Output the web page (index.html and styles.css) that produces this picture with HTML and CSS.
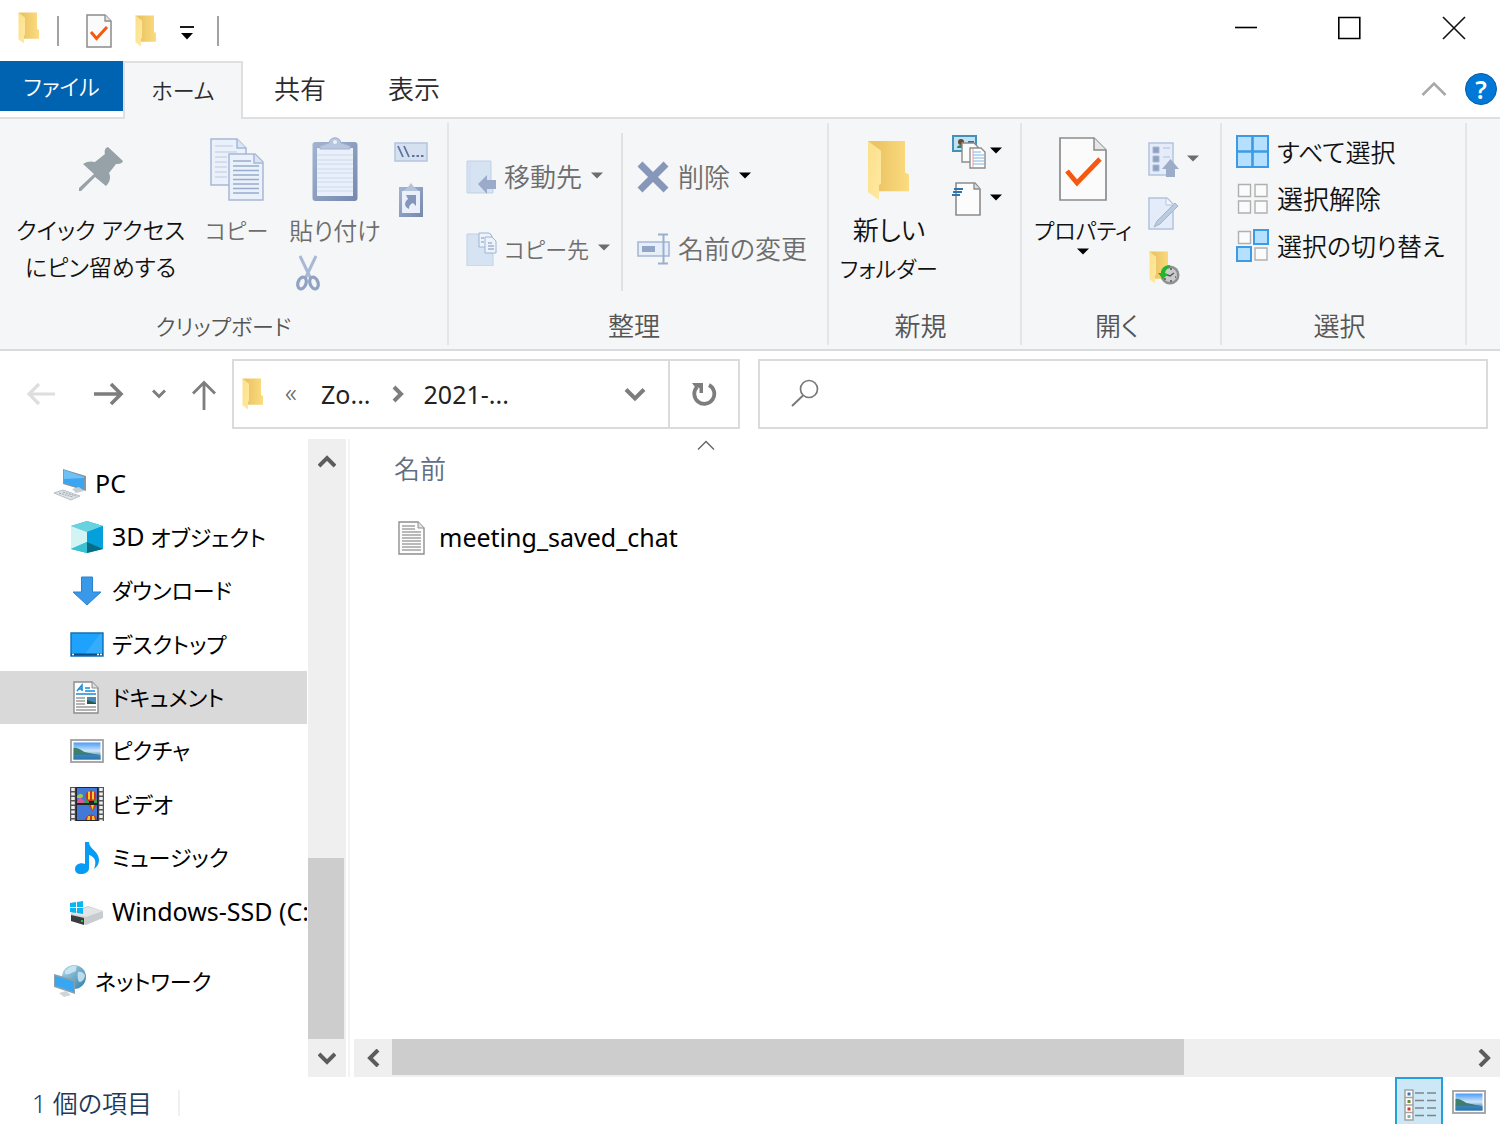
FILE: index.html
```html
<!DOCTYPE html>
<html lang="ja">
<head>
<meta charset="utf-8">
<meta name="viewport" content="width=device-width, initial-scale=1">
<title>エクスプローラー</title>
<link rel="stylesheet" href="styles.css">
</head>
<body>
<svg class="defs" aria-hidden="true">
  <defs>
    <linearGradient id="gBack" x1="0" y1="0" x2="1" y2="0"><stop offset="0.2" stop-color="#ebc464"/><stop offset="1" stop-color="#fbdc80"/></linearGradient>
    <linearGradient id="gFlap" x1="0" y1="0" x2="1" y2="1"><stop offset="0" stop-color="#fbe08a"/><stop offset="1" stop-color="#ffe9a2"/></linearGradient>
    <linearGradient id="gSky" x1="0" y1="0" x2="0" y2="1"><stop offset="0" stop-color="#4c9bf5"/><stop offset="0.5" stop-color="#cfe8fb"/><stop offset="0.65" stop-color="#8fb9cf"/><stop offset="1" stop-color="#1f6aa8"/></linearGradient>
    <linearGradient id="gBoard" x1="0" y1="0" x2="1" y2="1"><stop offset="0" stop-color="#a3b4d2"/><stop offset="1" stop-color="#7688ad"/></linearGradient>
    <linearGradient id="gGlobe" x1="0" y1="0" x2="1" y2="1"><stop offset="0" stop-color="#b5dcec"/><stop offset="1" stop-color="#2c7da8"/></linearGradient>
    <symbol id="folder" viewBox="0 0 44 62" preserveAspectRatio="none">
      <path d="M1 1h37v32l4 2v17H12z" fill="url(#gBack)"/>
      <path d="M1 1l13 10v33l-2 2v15L1 53z" fill="url(#gFlap)"/>
    </symbol>
    <symbol id="check" viewBox="0 0 48 64" preserveAspectRatio="none">
      <path d="M1 1h34l12 12v50H1z" fill="#fbfbfc" stroke="#8c8c8c" stroke-width="1.7"/>
      <path d="M35 1v12h12" fill="#e6e6e6" stroke="#8c8c8c" stroke-width="1.5"/>
      <path d="M8 34l10 12L41 22" fill="none" stroke="#f4590f" stroke-width="4.8"/>
    </symbol>
    <symbol id="picture" viewBox="0 0 34 24">
      <rect x="1" y="1" width="32" height="22" fill="#fff" stroke="#a0a0a0" stroke-width="1.8"/>
      <rect x="3.5" y="3.5" width="27" height="17" fill="url(#gSky)"/>
      <path d="M3.500 9c4-1 7 2 11 4 5 1 9 2 14 3h-25z" fill="#3f8069"/>
      <path d="M3.500 16c8-2 18-1 27 0v4.500h-27z" fill="#2d78b4" opacity=".75"/>
    </symbol>
    <symbol id="caret" viewBox="0 0 12 7"><path d="M0 .5h12L6 6.500z"/></symbol>
  </defs>
</svg>

<div class="window">
  <header class="titlebar">
    <div class="quick">
      <svg class="ic-folder-s" aria-hidden="true"><use href="#folder"/></svg>
      <span class="quick-line"></span>
      <button class="plain quick-props" aria-label="プロパティ"><svg width="26" height="34" viewBox="0 0 26 34"><path d="M1 1h18l6 6v26H1z" fill="#fbfbfc" stroke="#8c8c8c" stroke-width="1.500"/><path d="M19 1v6h6" fill="#e6e6e6" stroke="#8c8c8c" stroke-width="1.300"/><path d="M5 18l5.500 6.500L21 13" fill="none" stroke="#f4590f" stroke-width="3"/></svg></button>
      <button class="plain quick-folder" aria-label="新しいフォルダー"><svg class="ic-folder-s"><use href="#folder"/></svg></button>
      <button class="plain quick-more" aria-label="カスタマイズ"><svg width="14" height="14" viewBox="0 0 14 14"><path d="M0 1h14" stroke="#000" stroke-width="1.800"/><path d="M1 7h12l-6 6.500z"/></svg></button>
      <span class="quick-line"></span>
    </div>
    <div class="controls">
      <button class="plain" aria-label="最小化"><svg width="24" height="24" viewBox="0 0 24 24"><path d="M1 11.500h22" stroke="#000" stroke-width="1.600"/></svg></button>
      <button class="plain" aria-label="最大化"><svg width="24" height="24" viewBox="0 0 24 24"><path d="M.8 1.500h21v21h-21z" fill="none" stroke="#000" stroke-width="1.600"/></svg></button>
      <button class="plain" aria-label="閉じる"><svg width="24" height="24" viewBox="0 0 24 24"><path d="M1 1l22 22M23 1L1 23" stroke="#111" stroke-width="1.600"/></svg></button>
    </div>
  </header>

  <nav class="tabs" aria-label="リボン">
    <button class="tab tab-file kana">ファイル</button>
    <button class="tab tab-active kana">ホーム</button>
    <button class="tab">共有</button>
    <button class="tab">表示</button>
    <div class="tabs-end">
      <button class="plain" aria-label="リボンの最小化"><svg width="26" height="16" viewBox="0 0 26 16"><path d="M1.500 14L13 2.500 24.500 14" fill="none" stroke="#a9a9a9" stroke-width="2.600"/></svg></button>
      <button class="help" aria-label="ヘルプ">?</button>
    </div>
  </nav>

  <section class="ribbon">
    <div class="group g-clip">
      <div class="group-body">
        <button class="big pin">
          <svg width="64" height="64" viewBox="0 0 64 64"><path d="M39 10l15 14c-1 3-5 3-7 3L40 36c2 4 1 9-3 13L26 40 12 54l-2 0 0-3 15-14-11-10c4-3 9-3 12-2l10-8c-1-3 0-6 3-7z" fill="#96a2a7"/></svg>
          <span>クイック アクセス<br>にピン留めする</span>
        </button>
        <button class="big kana copy" disabled>
          <svg width="56" height="64" viewBox="0 0 56 64"><g fill="#eaf1fb" stroke="#a6b8d6" stroke-width="1.500"><path d="M2 2h26l9 9v37H2z"/><path d="M28 2v9h9" fill="#dbe6f5"/><path d="M20 17h26l8 8v38H20z"/><path d="M45 17v9h9" fill="#dbe6f5"/></g><path d="M6 9h18M6 15h22M6 20h12M6 25h12M6 30h12M6 35h12M6 40h12" stroke="#bccae0" stroke-width="1.200"/><path d="M24 24h18M24 29h26M24 33.500h26M24 38h26M24 42.500h26M24 47h26M24 51.500h26M24 56h26" stroke="#9aaccb" stroke-width="1.400"/></svg>
          <span>コピー</span>
        </button>
        <div class="stack">
          <button class="big paste" disabled>
            <svg width="46" height="64" viewBox="0 0 46 64"><rect x=".5" y="5" width="45" height="59" rx="3" fill="url(#gBoard)"/><path d="M5 11h36v48H5z" fill="#e9f0fa"/><path d="M5 18h36M5 23h36M5 27h36M5 32h36M5 36h36M5 41h36M5 45h36M5 50h36M5 54h36" stroke="#cdd8ea"/><path d="M8 12V9l9-3c1-7 11-7 12 0l9 3v3z" fill="#b9c7de" stroke="#a2b2cf"/><circle cx="23" cy="5" r="2" fill="#e9f0fa"/></svg>
            <span>貼り付け</span>
          </button>
          <button class="plain cut" disabled aria-label="切り取り"><svg width="24" height="36" viewBox="0 0 24 36"><path d="M4 1l11 23M20 1L9 24" stroke="#a9b9d4" stroke-width="3"/><g fill="none" stroke="#91a3c4" stroke-width="3.200"><ellipse cx="6" cy="28" rx="4" ry="6" transform="rotate(20 6 28)"/><ellipse cx="18" cy="28" rx="4" ry="6" transform="rotate(-20 18 28)"/></g></svg></button>
        </div>
        <div class="small-col clip-small">
          <button class="plain" disabled aria-label="パスのコピー"><svg width="34" height="20" viewBox="0 0 34 20"><rect x="1" y="1" width="32" height="18" fill="#d5e1f1" stroke="#b4c5de" stroke-width="1.500"/><path d="M4 4l5 11M10 4l5 11" stroke="#5e749e" stroke-width="1.800"/><path d="M18 14h2.500M22.500 14h2.500M27 14h2.500" stroke="#5e749e" stroke-width="2"/></svg></button>
          <button class="plain" disabled aria-label="ショートカットの貼り付け"><svg width="26" height="36" viewBox="0 0 26 36"><path d="M1 5h24v30H1z" fill="url(#gBoard)"/><path d="M4 9h18v22H4z" fill="#e9f0fa"/><path d="M5 9l5-4 3-4 3 4 5 4z" fill="#b5c3da"/><path d="M8 13h10v11l-3-3c-3 1-4 3-4 6-5-2-5-7-1-10z" fill="#8497ba"/></svg></button>
        </div>
      </div>
      <div class="group-name kana">クリップボード</div>
    </div>

    <div class="group g-org">
      <div class="group-body org-body">
        <div class="rows">
          <button class="row" disabled><svg width="31" height="34" viewBox="0 0 31 34"><path d="M1 1h24v19l2 1v12H1z" fill="#d6e3f3" stroke="#bfd0e7"/><path d="M4 2v30" stroke="#c9d8ec"/><path d="M12 24l9-9v5h9v9h-9v5z" fill="#9aaac8"/></svg><span>移動先</span><svg class="caret"><use href="#caret"/></svg></button>
          <button class="row" disabled><svg width="31" height="34" viewBox="0 0 31 34"><path d="M1 2h24v19l2 1v12H1z" fill="#d6e3f3" stroke="#bfd0e7"/><g fill="#edf3fb" stroke="#a0b3d2"><path d="M13 1h10l3 3v11H13z"/><path d="M19 5h7l4 4v12H19z"/></g><path d="M15 6h3M15 10h3M22 11h4M22 14h6M22 17h6" stroke="#a0b3d2" stroke-width="1.300"/></svg><span class="kana">コピー先</span><svg class="caret"><use href="#caret"/></svg></button>
        </div>
        <div class="rows rows-right">
          <button class="row" disabled><svg width="34" height="34" viewBox="0 0 34 34"><path d="M3 4l26 26M29 4L3 30" stroke="#8797b9" stroke-width="7"/></svg><span>削除</span><svg class="caret caret-on"><use href="#caret"/></svg></button>
          <button class="row" disabled><svg width="34" height="34" viewBox="0 0 34 34"><path d="M1 10h31v14H1z" fill="#e6eef9" stroke="#a6b8d6" stroke-width="1.600"/><path d="M5 14h13v6H5z" fill="#93a5c5"/><path d="M21 2.500h10M21 31.500h10M26.500 3v28" stroke="#9cafce" stroke-width="2"/></svg><span>名前の変更</span></button>
        </div>
      </div>
      <div class="group-name">整理</div>
    </div>

    <div class="group g-new">
      <div class="group-body">
        <button class="big kana">
          <svg width="44" height="64" viewBox="0 0 44 64"><use href="#folder" y="3" width="44" height="61"/></svg>
          <span><span class="kanji">新しい</span><br>フォルダー</span>
        </button>
        <div class="small-col new-small">
          <button class="row" aria-label="新しいアイテム"><svg width="34" height="34" viewBox="0 0 34 34"><path d="M1 1h23v15H1z" fill="#bfe2f4" stroke="#4590b8" stroke-width="2"/><path d="M5 13c0-4 8-4 8 0z" fill="#2f7d64"/><circle cx="9" cy="7" r="3" fill="#6b4a34"/><path d="M16 7h6" stroke="#2671a0" stroke-width="2"/><path d="M10 8h12l4 4v15H10z" fill="#fcfcfc" stroke="#8c8c8c" stroke-width="1.400"/><path d="M18 13h11l4 4v16H18z" fill="#fff" stroke="#8c8c8c" stroke-width="1.400"/><path d="M21 17h8M21 20h11M21 23h11M21 26h11M21 29h11" stroke="#a5cdf0" stroke-width="1.500"/><path d="M21 14v18" stroke="#ee9a9a"/></svg><svg class="caret caret-on"><use href="#caret"/></svg></button>
          <button class="row" aria-label="ショートカット"><svg width="34" height="34" viewBox="0 0 34 34"><path d="M4 1h19l5 6v26H4z" fill="#fcfcfc" stroke="#8c8c8c" stroke-width="1.600"/><path d="M22 1v6h6" fill="#ddd" stroke="#8c8c8c" stroke-width="1.300"/><path d="M2 7h9M1 10h9M0 13h8" stroke="#2f74ad" stroke-width="1.900"/></svg><svg class="caret caret-on"><use href="#caret"/></svg></button>
        </div>
      </div>
      <div class="group-name">新規</div>
    </div>

    <div class="group g-open">
      <div class="group-body">
        <button class="big kana">
          <svg width="48" height="64"><use href="#check"/></svg>
          <span>プロパティ</span>
          <svg class="caret caret-on"><use href="#caret"/></svg>
        </button>
        <div class="small-col open-small">
          <button class="row" disabled aria-label="開く"><svg width="32" height="36" viewBox="0 0 32 36"><path d="M1 1h24v32H1z" fill="#e3ecf8" stroke="#b2c3de" stroke-width="1.500"/><path d="M5 5h6v6H5zM5 14h6v6H5zM5 23h6v6H5z" fill="#8fa1c2" stroke="#a9b9d4"/><path d="M15 6h7M15 15h7" stroke="#c2d0e6" stroke-width="1.500"/><path d="M22.500 17l8.500 10h-4v8h-9v-8h-4z" fill="#9dacc9"/></svg><svg class="caret"><use href="#caret"/></svg></button>
          <button class="row" disabled aria-label="編集"><svg width="32" height="36" viewBox="0 0 32 36"><path d="M1 2h18l6 6v25H1z" fill="#e3ecf8" stroke="#b2c3de" stroke-width="1.500"/><path d="M18 2v7h7" fill="#f3f7fc" stroke="#b2c3de"/><path d="M6 31l3-6L27 7l3 3-18 18z" fill="#bccae0" stroke="#a2b4d0"/></svg></button>
          <button class="row" aria-label="履歴"><svg width="32" height="36" viewBox="0 0 32 36"><use href="#folder" x="1" y="1" width="22" height="33"/><circle cx="22" cy="25" r="9.500" fill="#8d9190"/><circle cx="22" cy="25" r="7" fill="#c9cccb"/><path d="M17 24l5 2 4-3M16 29h2M22 31h2M27 27h1M22 19h2" stroke="#555" stroke-width="1.500" fill="none"/><path d="M22 15c-6 0-9 4-9 8l-3 0 5 6 5-5h-3c0-3 2-6 5-6z" fill="#20b52b"/></svg></button>
        </div>
      </div>
      <div class="group-name">開く</div>
    </div>

    <div class="group g-sel">
      <div class="group-body sel-body">
        <button class="row"><svg width="34" height="34" viewBox="0 0 34 34"><path d="M1 1h31v31H1z" fill="#b6e0ff" stroke="#3d9ae4" stroke-width="2"/><path d="M16.500 1v31M1 16.500h31" stroke="#3d9ae4" stroke-width="2.600"/></svg><span>すべて選択</span></button>
        <button class="row"><svg width="34" height="34" viewBox="0 0 34 34"><path d="M2.500 2.500h12v12h-12zM19 2.500h12v12H19zM2.500 19h12v12h-12zM19 19h12v12H19z" fill="#fbfbfb" stroke="#b0b0b0" stroke-width="1.400"/></svg><span class="kanji">選択解除</span></button>
        <button class="row"><svg width="34" height="34" viewBox="0 0 34 34"><path d="M2.500 2.500h12v12h-12zM19 19h12v12H19z" fill="#fbfbfb" stroke="#b0b0b0" stroke-width="1.400"/><path d="M18 1h14v14H18zM1 18h14v14H1z" fill="#b6e0ff" stroke="#3d9ae4" stroke-width="2"/></svg><span>選択の切り替え</span></button>
      </div>
      <div class="group-name">選択</div>
    </div>
  </section>

  <div class="addressbar">
    <div class="nav">
      <button class="plain" disabled aria-label="戻る"><svg width="30" height="24" viewBox="0 0 30 24"><path d="M29 12H3M13 2L3 12l10 10" fill="none" stroke="#dedede" stroke-width="3.200"/></svg></button>
      <button class="plain nav-fwd" aria-label="進む"><svg width="30" height="24" viewBox="0 0 30 24"><path d="M0 12h27M17 2l10 10-10 10" fill="none" stroke="#7d7d7d" stroke-width="3.600"/></svg></button>
      <button class="plain nav-hist" aria-label="最近表示した場所"><svg width="14" height="10" viewBox="0 0 14 10"><path d="M1 1.500l6 6 6-6" fill="none" stroke="#7d7d7d" stroke-width="3"/></svg></button>
      <button class="plain nav-up" aria-label="上へ"><svg width="24" height="30" viewBox="0 0 24 30"><path d="M12 30V3M1 13.500L12 2.500l11 11" fill="none" stroke="#7d7d7d" stroke-width="2.800"/></svg></button>
    </div>
    <div class="address">
      <div class="crumbs">
        <svg class="ic-folder-s" aria-hidden="true"><use href="#folder"/></svg>
        <span class="crumb-more">«</span>
        <a class="crumb" href="#">Zo...</a>
        <svg width="12" height="18" viewBox="0 0 12 18"><path d="M2 2l7 7-7 7" fill="none" stroke="#7d7d7d" stroke-width="4"/></svg>
        <a class="crumb" href="#">2021-...</a>
        <button class="plain crumb-drop" aria-label="履歴を表示"><svg width="22" height="15" viewBox="0 0 22 15"><path d="M2 2.500l9 9 9-9" fill="none" stroke="#7d7d7d" stroke-width="4"/></svg></button>
      </div>
      <button class="plain refresh" aria-label="更新"><svg width="26" height="26" viewBox="0 0 26 26"><path d="M18 4a10 10 0 1 1-12 2" fill="none" stroke="#7d7d7d" stroke-width="3.800"/><path d="M1 2h11v10H8.500V7L4 6z" fill="#7d7d7d"/></svg></button>
    </div>
    <label class="search">
      <svg width="28" height="28" viewBox="0 0 28 28" aria-hidden="true"><circle cx="18" cy="10" r="8.500" fill="none" stroke="#777" stroke-width="1.700"/><path d="M12 16.500L1 27" stroke="#777" stroke-width="1.900"/></svg>
      <input type="search" aria-label="検索">
    </label>
  </div>

  <div class="main">
    <aside class="tree">
      <div class="tree-group">
        <a class="node top" href="#"><svg width="34" height="34" viewBox="0 0 34 34"><path d="M10 2l23 7v15L10 17z" fill="#8a959c"/><path d="M11 3l20 7v12.500L11 16z" fill="#3aa5f0"/><path d="M11 3l20 7v1L11 12z" fill="#6dc1f7"/><path d="M19 22l7-2 5 4-8 2z" fill="#c5cdd2"/><path d="M1 26l9-3 17 6-9 4z" fill="#dde3e8" stroke="#aab3ba" stroke-width=".8"/><path d="M6 26l14 4M10 25l13 4" stroke="#9ba6af" stroke-dasharray="2 1"/></svg><span class="latin">PC</span></a>
        <a class="node" href="#"><svg width="34" height="34" viewBox="0 0 34 34"><path d="M17 1l16 5v23l-16 4L1 29V6z" fill="#1bb5d2"/><path d="M17 1l16 5-16 6L1 6z" fill="#68d3df"/><path d="M1 6l16 6v10L1 29z" fill="#d3f4f4"/><path d="M33 6l-16 6v10l16 7z" fill="#03a0dc"/><path d="M1 29l16-7v11z" fill="#3cc0d3"/><path d="M33 29l-16-7v11z" fill="#056d86"/></svg><span><span class="latin">3D</span> オブジェクト</span></a>
        <a class="node" href="#"><svg width="34" height="34" viewBox="0 0 34 34"><path d="M11.500 3h11v15H31L17 31 3 18h8.500z" fill="#3a98e8" stroke="#2a83d2"/></svg><span>ダウンロード</span></a>
        <a class="node" href="#"><svg width="34" height="34" viewBox="0 0 34 34"><path d="M1 6h32v23H1z" fill="#1ea2fb" stroke="#1470b5" stroke-width="1.400"/><path d="M14 28L30 7h2v19z" fill="#45b3fd" opacity=".6"/><path d="M1 27.500h32" stroke="#0b4f86" stroke-width="2"/><path d="M2 27.500h2M27 27.500h2M30 27.500h2" stroke="#fff" stroke-width="1.500"/></svg><span>デスクトップ</span></a>
        <a class="node current" href="#" aria-current="true"><svg width="34" height="34" viewBox="0 0 34 34"><path d="M4 2h18l6 6v25H4z" fill="#fdfdfd" stroke="#8c8c8c" stroke-width="1.400"/><path d="M22 2v6h6" fill="#ddd" stroke="#8c8c8c"/><path d="M7 11l5-6v6M8 9h4M15 8h5M15 11h10M6 14h20" stroke="#1a8bd6" stroke-width="1.500" fill="none"/><path d="M6 18h9M6 21h9M6 24h9M6 27h20M6 30h20" stroke="#9a9a9a" stroke-width="1.300"/><path d="M17 17h9v7h-9z" fill="#4a87b5"/><path d="M17 24v-4l9 3v1z" fill="#27584d"/></svg><span>ドキュメント</span></a>
        <a class="node" href="#"><svg width="34" height="24"><use href="#picture"/></svg><span>ピクチャ</span></a>
        <a class="node" href="#"><svg width="34" height="34" viewBox="0 0 34 34"><path d="M0 0h34v34H0z" fill="#55555a"/><path d="M3 1v33M31 1v33" stroke="#f0f0f0" stroke-width="3.500" stroke-dasharray="3 1.500"/><path d="M5.500 0h23v34h-23z" fill="#26262a"/><path d="M7 1h20v15H7zM7 18h20v15H7z" fill="#4079d6"/><path d="M7 15l3-5 6 6H7z" fill="#d75c92"/><path d="M7 9c3-3 6-2 6 0s-3 2-6 2z" fill="#a5c94d"/><path d="M14 16l3-4h10v4z" fill="#3f9a46"/><circle cx="21" cy="9" r="5.500" fill="#c9322b"/><path d="M18 4.500h2l0 8h-2zM22 4.500h2v8h-2z" fill="#f5cf21"/><path d="M19 14h5v2h-5z" fill="#1f1f1f"/><path d="M18 18h9l-4.500 6z" fill="#d13a2a"/><path d="M21 18h3l-1.500 5z" fill="#f5cf21"/><path d="M15 33c1-7 11-7 12 0z" fill="#c9322b"/><path d="M17 33l1-4h2v4zM22 33v-4h2l1 4z" fill="#f2c51f"/></svg><span>ビデオ</span></a>
        <a class="node" href="#"><svg width="34" height="34" viewBox="0 0 34 34"><path d="M15 1h4c0 7 10 9 10 18 0 4-2 7-5 9 3-8 1-12-5-14v13c0 4-4 6-8 6-3 0-6-1-6-5 0-5 6-7 10-5z" fill="#069bf5"/></svg><span>ミュージック</span></a>
        <a class="node" href="#"><svg width="34" height="34" viewBox="0 0 34 34"><path d="M1 19l17-7 15 5v7l-17 7-15-4z" fill="#c9ccce"/><path d="M1 20l17-7 15 4-17 6z" fill="#e2e4e5"/><path d="M1 21l13 3v7L1 27z" fill="#3a3d3f"/><path d="M11 27h2" stroke="#30c040" stroke-width="2"/><path d="M0 9l6-1v5H0zM7 8l6-1v6H7zM0 14h6v5l-6-1zM7 14h6v6l-6-1z" fill="#08b7f2"/></svg><span class="latin">Windows-SSD (C:)</span></a>
      </div>
      <a class="node top net" href="#"><svg width="34" height="34" viewBox="0 0 34 34"><circle cx="21" cy="13" r="12" fill="url(#gGlobe)"/><path d="M12 7c4-5 9-6 12-5-2 3 1 5-3 6s-4 3-9 2zM25 8c3-1 5 0 7 3 0 4-3 7-5 7s-3-5-2-10z" fill="#d4ebf4" opacity=".8"/><path d="M1 10l21 6v14L1 23z" fill="#8ba0ad"/><path d="M2 12l19 5.500v10.500L2 21.500z" fill="#37a7f4"/><path d="M6 29l7-2 5 4-7 2z" fill="#cfd6db"/></svg><span>ネットワーク</span></a>
    </aside>
    <div class="vscroll">
      <button class="plain sb sb-up" aria-label="上へスクロール"><svg width="18" height="15" viewBox="0 0 18 15"><path d="M1 12l8-8 8 8" fill="none" stroke="#5c5c5c" stroke-width="4"/></svg></button>
      <div class="vthumb"></div>
      <button class="plain sb" aria-label="下へスクロール"><svg width="18" height="15" viewBox="0 0 18 15"><path d="M1 3l8 8 8-8" fill="none" stroke="#5c5c5c" stroke-width="4"/></svg></button>
    </div>
    <section class="content">
      <table class="files">
        <thead><tr><th aria-sort="ascending"><svg width="18" height="10" viewBox="0 0 18 10"><path d="M1 9.500L9 1.500l8 8" fill="none" stroke="#6a6a6a" stroke-width="1.500"/></svg><span>名前</span></th></tr></thead>
        <tbody><tr><td><a class="file latin" href="#"><svg width="27" height="34" viewBox="0 0 27 34"><path d="M1 1h19l6 6v26H1z" fill="#fdfdfd" stroke="#8f8f8f" stroke-width="1.400"/><path d="M20 1v6h6" fill="#e4e4e4" stroke="#8f8f8f"/><path d="M4 5h13M4 8h13M4 11h19M4 14h19M4 17h19M4 20h19M4 23h19M4 26h19M4 29h19" stroke="#a2a2a2" stroke-width="1.300"/></svg><span>meeting_saved_chat</span></a></td></tr></tbody>
      </table>
      <div class="hscroll">
        <button class="plain sb" aria-label="左へスクロール"><svg width="15" height="18" viewBox="0 0 15 18"><path d="M12 1L4 9l8 8" fill="none" stroke="#5c5c5c" stroke-width="4"/></svg></button>
        <div class="htrack"><div class="hthumb"></div></div>
        <button class="plain sb sb-right" aria-label="右へスクロール"><svg width="15" height="18" viewBox="0 0 15 18"><path d="M3 1l8 8-8 8" fill="none" stroke="#5c5c5c" stroke-width="4"/></svg></button>
      </div>
    </section>
  </div>

  <footer class="status">
    <span class="count">1 個の項目</span>
    <div class="views">
      <button class="view view-on" aria-label="詳細" aria-pressed="true"><svg width="32" height="32" viewBox="0 0 32 32"><path d="M1 1h8v30H1zM1 8.500h8M1 16h8M1 23.500h8" fill="#fff" stroke="#a3a3a3" stroke-width="1.500"/><path d="M3.500 5h3" stroke="#3c75ad" stroke-width="3"/><path d="M3.500 12.500h3" stroke="#6a8a3d" stroke-width="3"/><path d="M3.500 20h3" stroke="#c83a25" stroke-width="3"/><path d="M3.500 27.500h3" stroke="#8fae9d" stroke-width="3"/><path d="M11 4h9M23 4h9M11 11.500h9M23 11.500h9M11 19h9M23 19h9M11 26.500h9M23 26.500h9" stroke="#7d858a" stroke-width="1.600"/></svg></button>
      <button class="view view-large" aria-label="大アイコン" aria-pressed="false"><svg width="34" height="24"><use href="#picture"/></svg></button>
    </div>
  </footer>
</div>
</body>
</html>
```

FILE: styles.css
```css
* { box-sizing: border-box; }

body {
  margin: 0;
  background: #fff;
  color: #111;
  font-family: "Noto Sans", "Noto Sans CJK JP", sans-serif;
  font-size: 26px;
  font-weight: 350;
  line-height: 37px;
  font-feature-settings: "palt";
}

svg { display: block; flex: none; }
button, input { font: inherit; font-feature-settings: inherit; color: inherit; }
button { margin: 0; padding: 0; border: 0; background: none; }
a { color: inherit; text-decoration: none; }

.defs { position: absolute; width: 0; height: 0; }
.kana { font-size: 22px; }
.kanji { font-size: 26px; }
.latin { font-size: 25px; font-weight: 400; }
.plain { display: flex; align-items: center; justify-content: center; }

.window {
  display: flex;
  flex-direction: column;
  min-height: 100vh;
  overflow: hidden;
}

/* Title bar */
.titlebar {
  display: flex;
  justify-content: space-between;
  height: 61px;
  padding: 0 34px 0 18px;
}
.quick { display: flex; align-items: center; }
.ic-folder-s { width: 22px; height: 32px; }
.quick > .ic-folder-s { margin-bottom: 6px; }
.quick-line { width: 2px; height: 30px; margin-left: 17px; background: #a2a2a2; }
.quick-props { margin-left: 27px; }
.quick-folder { margin-left: 23px; }
.quick-more { margin-left: 23px; padding-top: 4px; }
.quick-more + .quick-line { margin-left: 23px; }
.controls { display: flex; align-items: center; gap: 80px; padding-bottom: 6px; }

/* Tabs */
.tabs {
  display: flex;
  height: 58px;
  background: linear-gradient(#dedfe0, #dedfe0) bottom / 100% 2px no-repeat;
}
.tab { width: 114px; padding-bottom: 2px; color: #2b2b2b; }
.tab-file { width: 123px; height: 50px; padding-bottom: 0; background: #0063b1; color: #fff; }
.tab-active {
  width: 120px;
  background: #f5f6f7;
  border: 2px solid #dedfe0;
  border-bottom: 0;
}
.tabs-end {
  display: flex;
  align-items: center;
  gap: 18px;
  margin-left: auto;
  padding: 0 3px 2px 0;
}
.help {
  width: 32px;
  height: 32px;
  border-radius: 50%;
  border: 1px solid #0a5ea8;
  background: #0078d7;
  color: #fff;
  font-size: 25px;
  font-weight: 600;
  line-height: 30px;
}

/* Ribbon */
.ribbon {
  display: flex;
  height: 232px;
  padding: 4px 0;
  background: #f5f6f7;
  border-bottom: 2px solid #dadbdc;
}
.group {
  display: flex;
  flex: none;
  flex-direction: column;
  border-right: 2px solid #e4e5e6;
}
.group-body { display: flex; flex: 1; align-items: flex-start; padding-top: 14px; }
.group-name { padding-right: 8px; color: #555; text-align: center; }
.g-clip { width: 449px; }
.g-org { width: 380px; }
.g-new { width: 193px; }
.g-open { width: 200px; }
.g-sel { width: 245px; }

.big {
  display: flex;
  flex-direction: column;
  align-items: center;
  gap: 11px;
  white-space: nowrap;
}
.big .caret { margin-top: -12px; }
button:disabled { color: #6d6d6d; }
.g-clip .group-body { padding-left: 16px; }
.g-clip .group-name { padding-right: 0; }
.pin { font-size: 23px; }
.copy { margin-left: 20px; }
.paste { font-size: 24px; }
.stack { display: flex; flex-direction: column; margin-left: 21px; }
.cut { margin: 6px 0 0 7px; align-self: flex-start; }
.small-col { display: flex; flex-direction: column; }
.clip-small { align-items: center; gap: 20px; margin-left: 13px; padding-top: 5px; }

.row {
  display: flex;
  align-items: center;
  height: 36px;
  white-space: nowrap;
}
.row span { margin-left: 7px; }
.caret { width: 12px; height: 7px; fill: #6d6d6d; }
.caret-on { fill: #000; }
.row .caret { margin-left: 9px; margin-bottom: 4px; }
.org-body { padding: 10px 0 0 17px; }
.rows { display: flex; flex-direction: column; gap: 36px; height: 158px; padding-top: 26px; width: 155px; }
.rows-right { width: 204px; padding-left: 14px; border-left: 2px solid #e0e1e2; }

.g-new .group-body { padding-left: 11px; gap: 14px; }
.new-small { gap: 11px; margin-top: -3px; }
.new-small .caret { margin-left: 4px; }
.g-open .group-body { padding-left: 12px; gap: 16px; }
.open-small { gap: 18px; padding-top: 5px; }
.open-small .caret { margin-left: 7px; }
.sel-body { flex-direction: column; gap: 11px; padding: 11px 0 0 14px; font-size: 25px; }

/* Address bar */
.addressbar {
  display: flex;
  height: 88px;
  padding: 8px 12px 10px 26px;
}
.nav { display: flex; flex: none; align-items: center; width: 206px; }
.nav-fwd { margin-left: 38px; }
.nav-hist { margin-left: 28px; }
.nav-up { margin-left: 26px; padding-top: 2px; }
.address { display: flex; flex: 508 1 508px; border: 2px solid #dbdbdb; }
.crumbs { display: flex; flex: 1; align-items: center; padding-left: 8px; color: #222; }
.crumb-more { width: 16px; margin-left: 21px; padding-bottom: 4px; color: #666; }
.crumb { margin-left: 20px; font-size: 25px; font-weight: 400; }
.crumb-more + .crumb { margin-right: 21px; }
.crumb-drop { margin-left: auto; padding-right: 22px; }
.refresh { width: 70px; border-left: 2px solid #dbdbdb; }
.search {
  display: flex;
  flex: 729 1 729px;
  align-items: center;
  gap: 12px;
  min-width: 0;
  margin-left: 18px;
  padding: 0 12px 2px 31px;
  border: 2px solid #dbdbdb;
}
.search input { flex: 1; min-width: 0; border: 0; outline: 0; background: none; }

/* Navigation tree */
.main { display: flex; flex: 1; }
.tree { flex: none; width: 307px; padding-top: 18px; overflow: hidden; }
.tree-group { display: grid; grid-auto-rows: 1fr; height: 481px; }
.node {
  display: flex;
  align-items: center;
  gap: 8px;
  padding-left: 70px;
  white-space: nowrap;
  font-size: 22px;
  font-weight: 400;
  color: #000;
}
.node.top { padding-left: 53px; }
.node.current { background: #d9d9d9; }
.net { height: 54px; margin-top: 16px; }

.sb { flex: none; width: 38px; height: 38px; }
.sb-up { margin-bottom: auto; padding-top: 6px; }
.sb-right { padding-left: 6px; }
.vscroll {
  display: flex;
  flex: none;
  flex-direction: column;
  align-items: flex-start;
  width: 38px;
  margin-left: 1px;
  background: #efefef;
}
.vthumb { width: 36px; height: 181px; background: #cdcdcd; }

/* File list */
.content {
  display: flex;
  flex: 1;
  flex-direction: column;
  justify-content: space-between;
  margin-left: 2px;
  padding-left: 4px;
  border-left: 2px solid #f3f3f3;
}
.files { width: 704px; border-collapse: collapse; }
.files th { padding: 1px 0 0; font-weight: inherit; color: #5f6f85; text-align: left; }
.files th svg { margin: 0 auto; }
.files th span { display: block; padding: 1px 0 0 40px; }
.files td { padding: 31px 0 0 44px; }
.file { display: flex; align-items: center; gap: 14px; color: #000; }
.hscroll { display: flex; height: 38px; background: #efefef; }
.htrack { flex: 1; }
.hthumb { width: 74%; height: 36px; background: #cdcdcd; }

/* Status bar */
.status { display: flex; height: 47px; align-items: center; justify-content: space-between; padding: 0 5px 0 32px; }
.count { margin-top: 4px; padding-right: 26px; border-right: 2px solid #f0f0f0; color: #1e395b; font-size: 25px; line-height: 26px; }
.views { display: flex; align-self: stretch; }
.view { display: flex; align-items: center; justify-content: center; width: 48px; }
.view-on { padding: 6px 0 0 2px; background: #cce8f6; border: 2px solid #26a0da; border-bottom: 0; }
.view-large { width: 52px; padding-top: 2px; }
```
